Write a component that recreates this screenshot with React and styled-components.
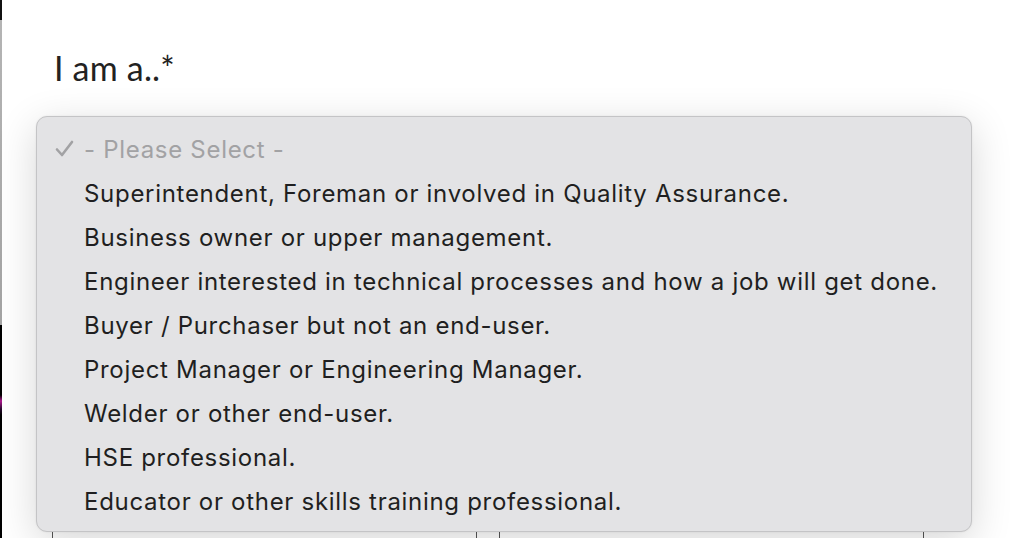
import React from 'react';
import styled, { createGlobalStyle } from 'styled-components';

const GlobalStyle = createGlobalStyle`
  html, body {
    margin: 0;
    padding: 0;
    background: #fff;
  }
  body {
    font-family: Inter, "Liberation Sans", sans-serif;
    overflow: hidden;
  }
`;

const Page = styled.div`
  display: flex;
  width: 1016px;
  height: 538px;
  overflow: hidden;
`;

const WindowEdge = styled.div`
  display: flex;
  flex-direction: column;
  width: 2px;
  flex: none;
`;

const EdgeSegment = styled.div`
  height: ${({ h }) => (h ? `${h}px` : 'auto')};
  flex: ${({ h }) => (h ? 'none' : '1')};
  background: ${({ bg }) => bg};
`;

const Main = styled.div`
  position: relative;
  flex: 1;
  padding: 44px 0 0 50px;
`;

const Label = styled.div`
  font-family: Lato, "Open Sans", sans-serif;
  font-size: 34px;
  color: #222;
  line-height: 48px;
  padding-left: 2px;
  letter-spacing: 0.2px;
`;

const FieldRow = styled.div`
  display: flex;
  gap: 22px;
  margin-top: 395px;
`;

const Field = styled.div`
  box-sizing: border-box;
  width: 425px;
  height: 80px;
  border: 1px solid #555;
  border-radius: 2px;
`;

const Menu = styled.ul`
  position: absolute;
  left: 34px;
  top: 116px;
  width: 934px;
  margin: 0;
  padding: 10px 0 8px;
  list-style: none;
  background: #e3e3e5;
  border: 1px solid #c4c4c6;
  border-radius: 11px;
  box-shadow: 0 10px 40px rgba(0, 0, 0, 0.16), 0 0 2px rgba(0, 0, 0, 0.08);
`;

const Option = styled.li`
  display: flex;
  align-items: center;
  height: 44px;
  padding-left: 47px;
  position: relative;
  font-size: 24px;
  letter-spacing: 0.7px;
  color: ${({ muted }) => (muted ? '#a2a2a4' : '#1f1f21')};
  white-space: nowrap;
`;

const Check = styled.svg`
  position: absolute;
  left: 18px;
  top: 13px;
  width: 19px;
  height: 18px;
`;

const options = [
  'Superintendent, Foreman or involved in Quality Assurance.',
  'Business owner or upper management.',
  'Engineer interested in technical processes and how a job will get done.',
  'Buyer / Purchaser but not an end-user.',
  'Project Manager or Engineering Manager.',
  'Welder or other end-user.',
  'HSE professional.',
  'Educator or other skills training professional.',
];

const App = () => (
  <Page>
    <GlobalStyle />
    <WindowEdge>
      <EdgeSegment h={20} bg="#111" />
      <EdgeSegment h={305} bg="linear-gradient(#b4b4b4, #a4a4a4)" />
      <EdgeSegment bg="linear-gradient(#000 0, #000 70px, #b01890 76px, #2a0a30 84px, #000 90px, #000 100%)" />
    </WindowEdge>
    <Main>
      <Label>I am a..*</Label>
      <FieldRow>
        <Field />
        <Field />
      </FieldRow>
      <Menu>
        <Option muted>
          <Check viewBox="0 0 19 18">
            <path
              d="M2 9.5 L7 15 L17 2"
              fill="none"
              stroke="#a2a2a4"
              strokeWidth="2.6"
              strokeLinecap="round"
              strokeLinejoin="round"
            />
          </Check>
          - Please Select -
        </Option>
        {options.map((o) => (
          <Option key={o}>{o}</Option>
        ))}
      </Menu>
    </Main>
  </Page>
);

export default App;
